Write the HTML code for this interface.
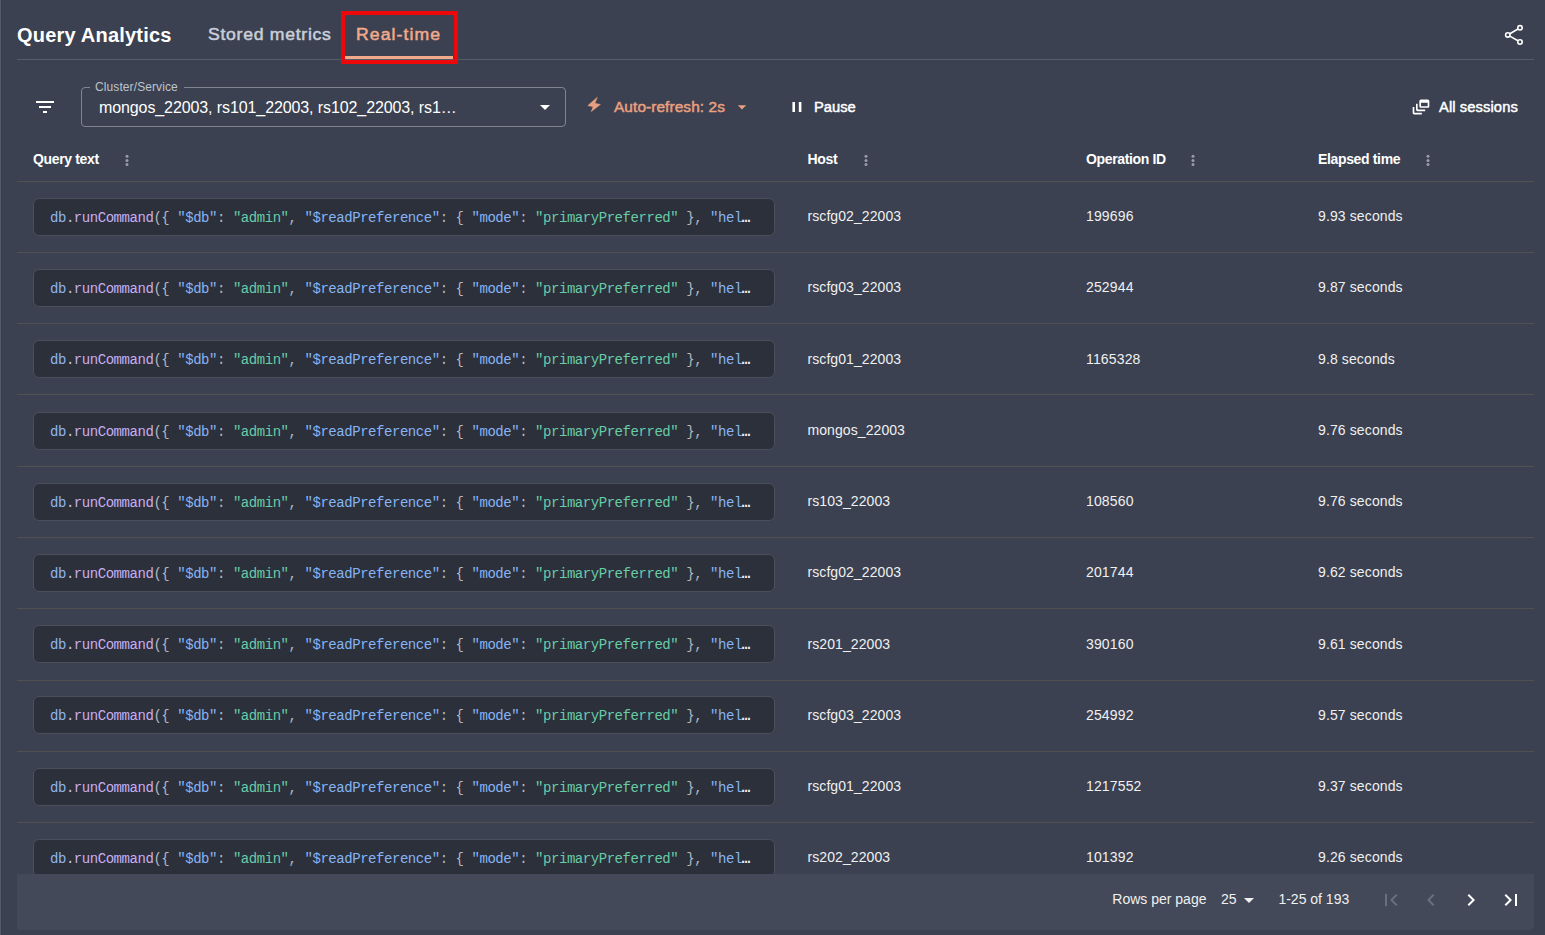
<!DOCTYPE html>
<html><head><meta charset="utf-8"><title>Query Analytics</title>
<style>
html,body{margin:0;padding:0;width:1545px;height:935px;overflow:hidden;background:#3b4151;}
body{position:relative;font-family:"Liberation Sans", sans-serif;}
.t{position:absolute;white-space:nowrap;}
.r{position:absolute;}
.code{position:absolute;left:33px;width:740px;height:36px;background:#2c303b;border:1px solid #4a4f5c;border-radius:6px;
box-sizing:content-box;}
.ct{position:absolute;left:16px;top:0;font-family:"Liberation Mono", monospace;font-size:14px;letter-spacing:-0.45px;line-height:38.742200000000004px;white-space:pre;}
</style></head><body>
<div class="r" style="left:0px;top:0px;width:1px;height:935px;background:#565c6b;"></div>
<div class="r" style="left:1px;top:0px;width:1px;height:935px;background:#383d4c;"></div>
<div class="t" style="left:17px;top:25.47px;font-size:20px;line-height:20px;color:#ffffff;font-weight:bold;font-family:'Liberation Sans', sans-serif;letter-spacing:0.2px;">Query Analytics</div>
<div class="t" style="left:208px;top:27.46px;font-size:16px;line-height:16px;color:#c9ced8;font-weight:normal;font-family:'Liberation Sans', sans-serif;letter-spacing:0.66px;-webkit-text-stroke:0.5px #c9ced8;transform:scaleX(1.1);transform-origin:0 0;">Stored metrics</div>
<div class="t" style="left:356px;top:27.46px;font-size:16px;line-height:16px;color:#f2a98a;font-weight:normal;font-family:'Liberation Sans', sans-serif;letter-spacing:0.98px;-webkit-text-stroke:0.5px #f2a98a;transform:scaleX(1.1);transform-origin:0 0;">Real-time</div>
<div class="r" style="left:17px;top:59px;width:1517px;height:1px;background:#565c6b;"></div>
<div class="r" style="left:344px;top:56px;width:109px;height:3px;background:#f2a98a;"></div>
<div class="r" style="left:341px;top:11px;width:109px;height:45px;border:4px solid #ec0808"></div>
<svg class="r" style="left:1500px;top:20px" width="30" height="30" viewBox="1500 20 30 30"><g fill="none" stroke="#fff" stroke-width="1.6"><circle cx="1520" cy="27.8" r="2.2"/><circle cx="1507.8" cy="34.9" r="2.2"/><circle cx="1520" cy="42" r="2.2"/><line x1="1509.8" y1="33.7" x2="1518" y2="29"/><line x1="1509.8" y1="36.1" x2="1518" y2="40.8"/></g></svg>
<svg class="r" style="left:33px;top:95px" width="24" height="24" viewBox="0 0 24 24"><path fill="#ffffff" d="M10 18h4v-2h-4v2zM3 6v2h18V6H3zm3 7h12v-2H6v2z"/></svg>
<div class="r" style="left:81px;top:87px;width:483px;height:38px;border:1px solid #80858f;border-radius:4px"></div>
<div class="r" style="left:90px;top:85px;width:94px;height:4px;background:#3b4151;"></div>
<div class="t" style="left:95px;top:80.84px;font-size:12px;line-height:12px;color:#bfc3cb;font-weight:normal;font-family:'Liberation Sans', sans-serif;letter-spacing:0.1px;">Cluster/Service</div>
<div class="t" style="left:99px;top:100.06px;font-size:16px;line-height:16px;color:#ffffff;font-weight:normal;font-family:'Liberation Sans', sans-serif;letter-spacing:-0.1px;">mongos_22003, rs101_22003, rs102_22003, rs1…</div>
<svg class="r" style="left:533px;top:95px" width="24" height="24" viewBox="0 0 24 24"><path fill="#ffffff" d="M7 10l5 5 5-5z"/></svg>
<svg class="r" style="left:580px;top:90px" width="30" height="30" viewBox="580 90 30 30"><path fill="#e9a080" stroke="#e9a080" stroke-width="0.5" stroke-linejoin="round" d="M597.3 97.3 L594.9 103.3 L600.4 104.5 L591.3 111.6 L593.1 106.7 L587.8 105.6 Z"/></svg>
<div class="t" style="left:614px;top:100.35px;font-size:14px;line-height:14px;color:#e9a080;font-weight:normal;font-family:'Liberation Sans', sans-serif;letter-spacing:0.08px;-webkit-text-stroke:0.45px #e9a080;transform:scaleX(1.1);transform-origin:0 0;">Auto-refresh: 2s</div>
<svg class="r" style="left:732px;top:96.5px" width="20" height="20" viewBox="0 0 24 24"><path fill="#e9a080" d="M7 10l5 5 5-5z"/></svg>
<svg class="r" style="left:788px;top:98px" width="18" height="18" viewBox="788 98 18 18"><rect x="792.4" y="102" width="2.6" height="10" fill="#fff"/><rect x="798.8" y="102" width="2.6" height="10" fill="#fff"/></svg>
<div class="t" style="left:814px;top:100.15px;font-size:14px;line-height:14px;color:#ffffff;font-weight:normal;font-family:'Liberation Sans', sans-serif;letter-spacing:0px;-webkit-text-stroke:0.45px #fff;transform:scaleX(1.05);transform-origin:0 0;">Pause</div>
<svg class="r" style="left:1411.2px;top:97.4px" width="20" height="20" viewBox="0 0 24 24"><path fill="#ffffff" d="M8 8H6v7c0 1.1.9 2 2 2h9v-2H8V8zM20 3h-8c-1.1 0-2 .9-2 2v6c0 1.1.9 2 2 2h8c1.1 0 2-.9 2-2V5c0-1.1-.9-2-2-2zm0 8h-8V7h8v4zM4 12H2v7c0 1.1.9 2 2 2h9v-2H4v-7z"/></svg>
<div class="t" style="left:1439px;top:100.15px;font-size:14px;line-height:14px;color:#ffffff;font-weight:normal;font-family:'Liberation Sans', sans-serif;letter-spacing:0.1px;-webkit-text-stroke:0.45px #fff;transform:scaleX(1.05);transform-origin:0 0;">All sessions</div>
<div class="t" style="left:33px;top:152.15px;font-size:14px;line-height:14px;color:#ffffff;font-weight:bold;font-family:'Liberation Sans', sans-serif;letter-spacing:-0.35px;">Query text</div>
<svg class="r" style="left:124.1px;top:152px" width="6" height="16" viewBox="124.1 152 6 16"><g fill="#9a9ca6"><circle cx="127.1" cy="156.3" r="1.5"/><circle cx="127.1" cy="160.45" r="1.5"/><circle cx="127.1" cy="164.6" r="1.5"/></g></svg>
<div class="t" style="left:807.5px;top:152.15px;font-size:14px;line-height:14px;color:#ffffff;font-weight:bold;font-family:'Liberation Sans', sans-serif;letter-spacing:-0.35px;">Host</div>
<svg class="r" style="left:863.2px;top:152px" width="6" height="16" viewBox="863.2 152 6 16"><g fill="#9a9ca6"><circle cx="866.2" cy="156.3" r="1.5"/><circle cx="866.2" cy="160.45" r="1.5"/><circle cx="866.2" cy="164.6" r="1.5"/></g></svg>
<div class="t" style="left:1086px;top:152.15px;font-size:14px;line-height:14px;color:#ffffff;font-weight:bold;font-family:'Liberation Sans', sans-serif;letter-spacing:-0.35px;">Operation ID</div>
<svg class="r" style="left:1190.3px;top:152px" width="6" height="16" viewBox="1190.3 152 6 16"><g fill="#9a9ca6"><circle cx="1193.3" cy="156.3" r="1.5"/><circle cx="1193.3" cy="160.45" r="1.5"/><circle cx="1193.3" cy="164.6" r="1.5"/></g></svg>
<div class="t" style="left:1318px;top:152.15px;font-size:14px;line-height:14px;color:#ffffff;font-weight:bold;font-family:'Liberation Sans', sans-serif;letter-spacing:-0.35px;">Elapsed time</div>
<svg class="r" style="left:1425.4px;top:152px" width="6" height="16" viewBox="1425.4 152 6 16"><g fill="#9a9ca6"><circle cx="1428.4" cy="156.3" r="1.5"/><circle cx="1428.4" cy="160.45" r="1.5"/><circle cx="1428.4" cy="164.6" r="1.5"/></g></svg>
<div class="r" style="left:17px;top:181px;width:1517px;height:1px;background:#515151;"></div>
<div class="r" style="left:17px;top:252px;width:1517px;height:1px;background:#515151;"></div>
<div class="code" style="top:198px"><div class="ct"><span style="color:#8db6f0">db</span><span style="color:#c8ccd4">.</span><span style="color:#c9aef0">runCommand</span><span style="color:#b4b8c0">({</span> <span style="color:#86b4f4">"$db"</span><span style="color:#b0b8c0">:</span> <span style="color:#68cca8">"admin"</span><span style="color:#b0b8c0">,</span> <span style="color:#86b4f4">"$readPreference"</span><span style="color:#b0b8c0">:</span> <span style="color:#b4b8c0">{</span> <span style="color:#86b4f4">"mode"</span><span style="color:#b0b8c0">:</span> <span style="color:#68cca8">"primaryPreferred"</span> <span style="color:#b4b8c0">}</span><span style="color:#b0b8c0">,</span> <span style="color:#86b4f4">"hel</span><b style="color:#f4f4f4">…</b></div></div>
<div class="t" style="left:807.5px;top:209.15px;font-size:14px;line-height:14px;color:#f0f0f0;font-weight:normal;font-family:'Liberation Sans', sans-serif;letter-spacing:0.08px;">rscfg02_22003</div>
<div class="t" style="left:1086px;top:209.15px;font-size:14px;line-height:14px;color:#f0f0f0;font-weight:normal;font-family:'Liberation Sans', sans-serif;letter-spacing:0.15px;">199696</div>
<div class="t" style="left:1318px;top:209.15px;font-size:14px;line-height:14px;color:#f0f0f0;font-weight:normal;font-family:'Liberation Sans', sans-serif;letter-spacing:0.12px;">9.93 seconds</div>
<div class="r" style="left:17px;top:323px;width:1517px;height:1px;background:#515151;"></div>
<div class="code" style="top:269px"><div class="ct"><span style="color:#8db6f0">db</span><span style="color:#c8ccd4">.</span><span style="color:#c9aef0">runCommand</span><span style="color:#b4b8c0">({</span> <span style="color:#86b4f4">"$db"</span><span style="color:#b0b8c0">:</span> <span style="color:#68cca8">"admin"</span><span style="color:#b0b8c0">,</span> <span style="color:#86b4f4">"$readPreference"</span><span style="color:#b0b8c0">:</span> <span style="color:#b4b8c0">{</span> <span style="color:#86b4f4">"mode"</span><span style="color:#b0b8c0">:</span> <span style="color:#68cca8">"primaryPreferred"</span> <span style="color:#b4b8c0">}</span><span style="color:#b0b8c0">,</span> <span style="color:#86b4f4">"hel</span><b style="color:#f4f4f4">…</b></div></div>
<div class="t" style="left:807.5px;top:280.40px;font-size:14px;line-height:14px;color:#f0f0f0;font-weight:normal;font-family:'Liberation Sans', sans-serif;letter-spacing:0.08px;">rscfg03_22003</div>
<div class="t" style="left:1086px;top:280.40px;font-size:14px;line-height:14px;color:#f0f0f0;font-weight:normal;font-family:'Liberation Sans', sans-serif;letter-spacing:0.15px;">252944</div>
<div class="t" style="left:1318px;top:280.40px;font-size:14px;line-height:14px;color:#f0f0f0;font-weight:normal;font-family:'Liberation Sans', sans-serif;letter-spacing:0.12px;">9.87 seconds</div>
<div class="r" style="left:17px;top:394px;width:1517px;height:1px;background:#515151;"></div>
<div class="code" style="top:340px"><div class="ct"><span style="color:#8db6f0">db</span><span style="color:#c8ccd4">.</span><span style="color:#c9aef0">runCommand</span><span style="color:#b4b8c0">({</span> <span style="color:#86b4f4">"$db"</span><span style="color:#b0b8c0">:</span> <span style="color:#68cca8">"admin"</span><span style="color:#b0b8c0">,</span> <span style="color:#86b4f4">"$readPreference"</span><span style="color:#b0b8c0">:</span> <span style="color:#b4b8c0">{</span> <span style="color:#86b4f4">"mode"</span><span style="color:#b0b8c0">:</span> <span style="color:#68cca8">"primaryPreferred"</span> <span style="color:#b4b8c0">}</span><span style="color:#b0b8c0">,</span> <span style="color:#86b4f4">"hel</span><b style="color:#f4f4f4">…</b></div></div>
<div class="t" style="left:807.5px;top:351.65px;font-size:14px;line-height:14px;color:#f0f0f0;font-weight:normal;font-family:'Liberation Sans', sans-serif;letter-spacing:0.08px;">rscfg01_22003</div>
<div class="t" style="left:1086px;top:351.65px;font-size:14px;line-height:14px;color:#f0f0f0;font-weight:normal;font-family:'Liberation Sans', sans-serif;letter-spacing:0.15px;">1165328</div>
<div class="t" style="left:1318px;top:351.65px;font-size:14px;line-height:14px;color:#f0f0f0;font-weight:normal;font-family:'Liberation Sans', sans-serif;letter-spacing:0.12px;">9.8 seconds</div>
<div class="r" style="left:17px;top:466px;width:1517px;height:1px;background:#515151;"></div>
<div class="code" style="top:412px"><div class="ct"><span style="color:#8db6f0">db</span><span style="color:#c8ccd4">.</span><span style="color:#c9aef0">runCommand</span><span style="color:#b4b8c0">({</span> <span style="color:#86b4f4">"$db"</span><span style="color:#b0b8c0">:</span> <span style="color:#68cca8">"admin"</span><span style="color:#b0b8c0">,</span> <span style="color:#86b4f4">"$readPreference"</span><span style="color:#b0b8c0">:</span> <span style="color:#b4b8c0">{</span> <span style="color:#86b4f4">"mode"</span><span style="color:#b0b8c0">:</span> <span style="color:#68cca8">"primaryPreferred"</span> <span style="color:#b4b8c0">}</span><span style="color:#b0b8c0">,</span> <span style="color:#86b4f4">"hel</span><b style="color:#f4f4f4">…</b></div></div>
<div class="t" style="left:807.5px;top:422.90px;font-size:14px;line-height:14px;color:#f0f0f0;font-weight:normal;font-family:'Liberation Sans', sans-serif;letter-spacing:0.08px;">mongos_22003</div>
<div class="t" style="left:1318px;top:422.90px;font-size:14px;line-height:14px;color:#f0f0f0;font-weight:normal;font-family:'Liberation Sans', sans-serif;letter-spacing:0.12px;">9.76 seconds</div>
<div class="r" style="left:17px;top:537px;width:1517px;height:1px;background:#515151;"></div>
<div class="code" style="top:483px"><div class="ct"><span style="color:#8db6f0">db</span><span style="color:#c8ccd4">.</span><span style="color:#c9aef0">runCommand</span><span style="color:#b4b8c0">({</span> <span style="color:#86b4f4">"$db"</span><span style="color:#b0b8c0">:</span> <span style="color:#68cca8">"admin"</span><span style="color:#b0b8c0">,</span> <span style="color:#86b4f4">"$readPreference"</span><span style="color:#b0b8c0">:</span> <span style="color:#b4b8c0">{</span> <span style="color:#86b4f4">"mode"</span><span style="color:#b0b8c0">:</span> <span style="color:#68cca8">"primaryPreferred"</span> <span style="color:#b4b8c0">}</span><span style="color:#b0b8c0">,</span> <span style="color:#86b4f4">"hel</span><b style="color:#f4f4f4">…</b></div></div>
<div class="t" style="left:807.5px;top:494.15px;font-size:14px;line-height:14px;color:#f0f0f0;font-weight:normal;font-family:'Liberation Sans', sans-serif;letter-spacing:0.08px;">rs103_22003</div>
<div class="t" style="left:1086px;top:494.15px;font-size:14px;line-height:14px;color:#f0f0f0;font-weight:normal;font-family:'Liberation Sans', sans-serif;letter-spacing:0.15px;">108560</div>
<div class="t" style="left:1318px;top:494.15px;font-size:14px;line-height:14px;color:#f0f0f0;font-weight:normal;font-family:'Liberation Sans', sans-serif;letter-spacing:0.12px;">9.76 seconds</div>
<div class="r" style="left:17px;top:608px;width:1517px;height:1px;background:#515151;"></div>
<div class="code" style="top:554px"><div class="ct"><span style="color:#8db6f0">db</span><span style="color:#c8ccd4">.</span><span style="color:#c9aef0">runCommand</span><span style="color:#b4b8c0">({</span> <span style="color:#86b4f4">"$db"</span><span style="color:#b0b8c0">:</span> <span style="color:#68cca8">"admin"</span><span style="color:#b0b8c0">,</span> <span style="color:#86b4f4">"$readPreference"</span><span style="color:#b0b8c0">:</span> <span style="color:#b4b8c0">{</span> <span style="color:#86b4f4">"mode"</span><span style="color:#b0b8c0">:</span> <span style="color:#68cca8">"primaryPreferred"</span> <span style="color:#b4b8c0">}</span><span style="color:#b0b8c0">,</span> <span style="color:#86b4f4">"hel</span><b style="color:#f4f4f4">…</b></div></div>
<div class="t" style="left:807.5px;top:565.40px;font-size:14px;line-height:14px;color:#f0f0f0;font-weight:normal;font-family:'Liberation Sans', sans-serif;letter-spacing:0.08px;">rscfg02_22003</div>
<div class="t" style="left:1086px;top:565.40px;font-size:14px;line-height:14px;color:#f0f0f0;font-weight:normal;font-family:'Liberation Sans', sans-serif;letter-spacing:0.15px;">201744</div>
<div class="t" style="left:1318px;top:565.40px;font-size:14px;line-height:14px;color:#f0f0f0;font-weight:normal;font-family:'Liberation Sans', sans-serif;letter-spacing:0.12px;">9.62 seconds</div>
<div class="r" style="left:17px;top:680px;width:1517px;height:1px;background:#515151;"></div>
<div class="code" style="top:625px"><div class="ct"><span style="color:#8db6f0">db</span><span style="color:#c8ccd4">.</span><span style="color:#c9aef0">runCommand</span><span style="color:#b4b8c0">({</span> <span style="color:#86b4f4">"$db"</span><span style="color:#b0b8c0">:</span> <span style="color:#68cca8">"admin"</span><span style="color:#b0b8c0">,</span> <span style="color:#86b4f4">"$readPreference"</span><span style="color:#b0b8c0">:</span> <span style="color:#b4b8c0">{</span> <span style="color:#86b4f4">"mode"</span><span style="color:#b0b8c0">:</span> <span style="color:#68cca8">"primaryPreferred"</span> <span style="color:#b4b8c0">}</span><span style="color:#b0b8c0">,</span> <span style="color:#86b4f4">"hel</span><b style="color:#f4f4f4">…</b></div></div>
<div class="t" style="left:807.5px;top:636.65px;font-size:14px;line-height:14px;color:#f0f0f0;font-weight:normal;font-family:'Liberation Sans', sans-serif;letter-spacing:0.08px;">rs201_22003</div>
<div class="t" style="left:1086px;top:636.65px;font-size:14px;line-height:14px;color:#f0f0f0;font-weight:normal;font-family:'Liberation Sans', sans-serif;letter-spacing:0.15px;">390160</div>
<div class="t" style="left:1318px;top:636.65px;font-size:14px;line-height:14px;color:#f0f0f0;font-weight:normal;font-family:'Liberation Sans', sans-serif;letter-spacing:0.12px;">9.61 seconds</div>
<div class="r" style="left:17px;top:751px;width:1517px;height:1px;background:#515151;"></div>
<div class="code" style="top:696px"><div class="ct"><span style="color:#8db6f0">db</span><span style="color:#c8ccd4">.</span><span style="color:#c9aef0">runCommand</span><span style="color:#b4b8c0">({</span> <span style="color:#86b4f4">"$db"</span><span style="color:#b0b8c0">:</span> <span style="color:#68cca8">"admin"</span><span style="color:#b0b8c0">,</span> <span style="color:#86b4f4">"$readPreference"</span><span style="color:#b0b8c0">:</span> <span style="color:#b4b8c0">{</span> <span style="color:#86b4f4">"mode"</span><span style="color:#b0b8c0">:</span> <span style="color:#68cca8">"primaryPreferred"</span> <span style="color:#b4b8c0">}</span><span style="color:#b0b8c0">,</span> <span style="color:#86b4f4">"hel</span><b style="color:#f4f4f4">…</b></div></div>
<div class="t" style="left:807.5px;top:707.90px;font-size:14px;line-height:14px;color:#f0f0f0;font-weight:normal;font-family:'Liberation Sans', sans-serif;letter-spacing:0.08px;">rscfg03_22003</div>
<div class="t" style="left:1086px;top:707.90px;font-size:14px;line-height:14px;color:#f0f0f0;font-weight:normal;font-family:'Liberation Sans', sans-serif;letter-spacing:0.15px;">254992</div>
<div class="t" style="left:1318px;top:707.90px;font-size:14px;line-height:14px;color:#f0f0f0;font-weight:normal;font-family:'Liberation Sans', sans-serif;letter-spacing:0.12px;">9.57 seconds</div>
<div class="r" style="left:17px;top:822px;width:1517px;height:1px;background:#515151;"></div>
<div class="code" style="top:768px"><div class="ct"><span style="color:#8db6f0">db</span><span style="color:#c8ccd4">.</span><span style="color:#c9aef0">runCommand</span><span style="color:#b4b8c0">({</span> <span style="color:#86b4f4">"$db"</span><span style="color:#b0b8c0">:</span> <span style="color:#68cca8">"admin"</span><span style="color:#b0b8c0">,</span> <span style="color:#86b4f4">"$readPreference"</span><span style="color:#b0b8c0">:</span> <span style="color:#b4b8c0">{</span> <span style="color:#86b4f4">"mode"</span><span style="color:#b0b8c0">:</span> <span style="color:#68cca8">"primaryPreferred"</span> <span style="color:#b4b8c0">}</span><span style="color:#b0b8c0">,</span> <span style="color:#86b4f4">"hel</span><b style="color:#f4f4f4">…</b></div></div>
<div class="t" style="left:807.5px;top:779.15px;font-size:14px;line-height:14px;color:#f0f0f0;font-weight:normal;font-family:'Liberation Sans', sans-serif;letter-spacing:0.08px;">rscfg01_22003</div>
<div class="t" style="left:1086px;top:779.15px;font-size:14px;line-height:14px;color:#f0f0f0;font-weight:normal;font-family:'Liberation Sans', sans-serif;letter-spacing:0.15px;">1217552</div>
<div class="t" style="left:1318px;top:779.15px;font-size:14px;line-height:14px;color:#f0f0f0;font-weight:normal;font-family:'Liberation Sans', sans-serif;letter-spacing:0.12px;">9.37 seconds</div>
<div class="code" style="top:839px"><div class="ct"><span style="color:#8db6f0">db</span><span style="color:#c8ccd4">.</span><span style="color:#c9aef0">runCommand</span><span style="color:#b4b8c0">({</span> <span style="color:#86b4f4">"$db"</span><span style="color:#b0b8c0">:</span> <span style="color:#68cca8">"admin"</span><span style="color:#b0b8c0">,</span> <span style="color:#86b4f4">"$readPreference"</span><span style="color:#b0b8c0">:</span> <span style="color:#b4b8c0">{</span> <span style="color:#86b4f4">"mode"</span><span style="color:#b0b8c0">:</span> <span style="color:#68cca8">"primaryPreferred"</span> <span style="color:#b4b8c0">}</span><span style="color:#b0b8c0">,</span> <span style="color:#86b4f4">"hel</span><b style="color:#f4f4f4">…</b></div></div>
<div class="t" style="left:807.5px;top:850.40px;font-size:14px;line-height:14px;color:#f0f0f0;font-weight:normal;font-family:'Liberation Sans', sans-serif;letter-spacing:0.08px;">rs202_22003</div>
<div class="t" style="left:1086px;top:850.40px;font-size:14px;line-height:14px;color:#f0f0f0;font-weight:normal;font-family:'Liberation Sans', sans-serif;letter-spacing:0.15px;">101392</div>
<div class="t" style="left:1318px;top:850.40px;font-size:14px;line-height:14px;color:#f0f0f0;font-weight:normal;font-family:'Liberation Sans', sans-serif;letter-spacing:0.12px;">9.26 seconds</div>
<div class="r" style="left:17px;top:874px;width:1517px;height:56px;background:#434958;border-radius:0 0 4px 4px"></div>
<div class="t" style="left:1112.3px;top:892.15px;font-size:14px;line-height:14px;color:#f0f0f0;font-weight:normal;font-family:'Liberation Sans', sans-serif;letter-spacing:0px;">Rows per page</div>
<div class="t" style="left:1221px;top:892.15px;font-size:14px;line-height:14px;color:#f0f0f0;font-weight:normal;font-family:'Liberation Sans', sans-serif;letter-spacing:0px;">25</div>
<svg class="r" style="left:1237px;top:888px" width="24" height="24" viewBox="0 0 24 24"><path fill="#f0f0f0" d="M7 10l5 5 5-5z"/></svg>
<div class="t" style="left:1278.4px;top:892.15px;font-size:14px;line-height:14px;color:#f0f0f0;font-weight:normal;font-family:'Liberation Sans', sans-serif;letter-spacing:0px;">1-25 of 193</div>
<svg class="r" style="left:1379.3px;top:888.3px" width="24" height="24" viewBox="0 0 24 24"><path fill="#6a6f7c" d="M18.41 16.59L13.82 12l4.59-4.59L17 6l-6 6 6 6zM6 6h2v12H6z"/></svg>
<svg class="r" style="left:1419.4px;top:888.3px" width="24" height="24" viewBox="0 0 24 24"><path fill="#6a6f7c" d="M15.41 7.41L14 6l-6 6 6 6 1.41-1.41L10.83 12z"/></svg>
<svg class="r" style="left:1459.2px;top:888.3px" width="24" height="24" viewBox="0 0 24 24"><path fill="#ffffff" d="M10 6L8.59 7.41 13.17 12l-4.58 4.59L10 18l6-6z"/></svg>
<svg class="r" style="left:1499.2px;top:888.3px" width="24" height="24" viewBox="0 0 24 24"><path fill="#ffffff" d="M5.59 7.41L10.18 12l-4.59 4.59L7 18l6-6-6-6zM16 6h2v12h-2z"/></svg>
</body></html>
